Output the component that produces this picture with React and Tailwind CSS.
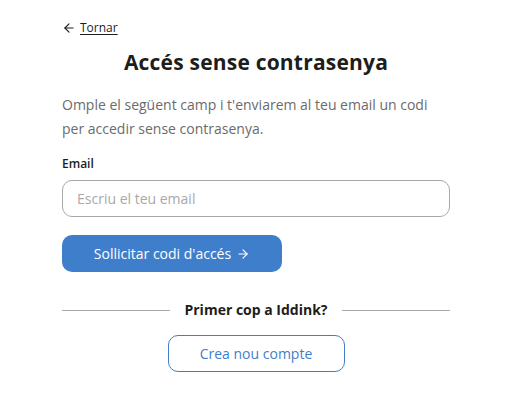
import { ArrowLeft, ArrowRight } from "lucide-react";

export default function App() {
  return (
    <div className="min-h-screen bg-white font-['Open_Sans',sans-serif] text-[#1d1d1b]">
      <div className="w-[388px] ml-[62px] pt-[19px]">
        <a href="#" className="flex items-center gap-[4px] text-[12px] text-[#1d1d1b]">
          <ArrowLeft size={14} strokeWidth={2} />
          <span className="underline underline-offset-2">Tornar</span>
        </a>

        <h1 className="mt-[10px] text-center text-[21px] leading-[30px] font-bold tracking-[0.2px]">
          Accés sense contrasenya
        </h1>

        <p className="mt-[16px] text-[14px] leading-[24px] text-[#6b6b6b]">
          Omple el següent camp i t'enviarem al teu email un codi per accedir sense contrasenya.
        </p>

        <label className="block mt-[14px] text-[12px] font-semibold">Email</label>
        <input
          type="email"
          placeholder="Escriu el teu email"
          className="mt-[7px] block w-full h-[37px] rounded-[10px] border border-[#a8a8a8] px-[14px] text-[14px] placeholder:text-[#a9a9a9] outline-none"
        />

        <button
          type="button"
          className="mt-[18px] flex items-center justify-center gap-[5px] w-[220px] h-[37px] rounded-[10px] bg-[#3f7ecb] text-white text-[14px]"
        >
          Sollicitar codi d'accés
          <ArrowRight size={14} strokeWidth={2} />
        </button>

        <div className="mt-[28px] flex items-center gap-[14px]">
          <div className="flex-1 h-px bg-[#a8a8a8]" />
          <span className="text-[14px] leading-[20px] font-bold">Primer cop a Iddink?</span>
          <div className="flex-1 h-px bg-[#a8a8a8]" />
        </div>

        <div className="mt-[15px] flex justify-center">
          <button
            type="button"
            className="w-[177px] h-[37px] rounded-[10px] border border-[#3f7ecb] text-[#3f7ecb] text-[14px]"
          >
            Crea nou compte
          </button>
        </div>
      </div>
    </div>
  );
}
